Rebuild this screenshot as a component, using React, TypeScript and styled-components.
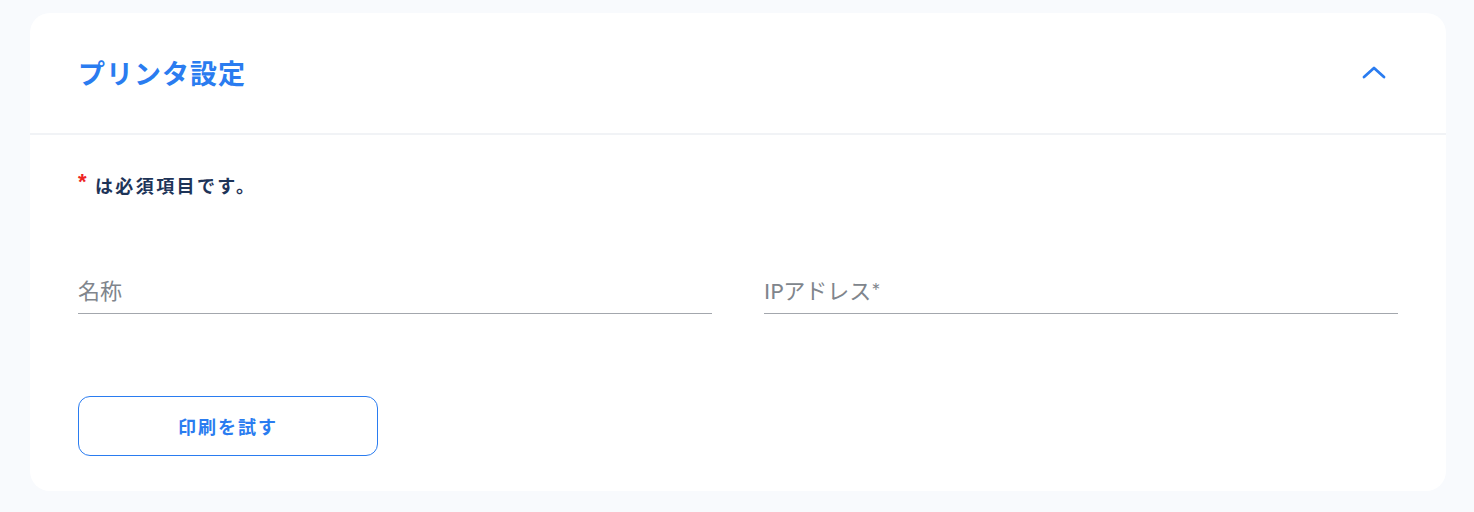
import React from "react";
import styled, { createGlobalStyle } from "styled-components";

const GlobalStyle = createGlobalStyle`
  html, body {
    margin: 0;
    padding: 0;
    background: #f8fafd;
    font-family: "Noto Sans CJK JP", "Noto Sans", sans-serif;
  }
`;

const Page = styled.div`
  padding: 13px 28px 21px 30px;
  box-sizing: border-box;
  width: 1474px;
  min-height: 512px;
`;

const Card = styled.section`
  background: #ffffff;
  border-radius: 20px;
  overflow: hidden;
`;

const Header = styled.header`
  height: 122px;
  box-sizing: border-box;
  display: flex;
  align-items: center;
  justify-content: space-between;
  padding: 0 58px 2px 48px;
  border-bottom: 2px solid #f1f3f6;
`;

const Title = styled.h2`
  margin: 0;
  font-size: 27px;
  font-weight: 700;
  letter-spacing: 1px;
  color: #2a7cf0;
`;

const Toggle = styled.button`
  border: none;
  background: none;
  padding: 0;
  width: 28px;
  height: 28px;
  display: flex;
  align-items: center;
  justify-content: center;
  cursor: pointer;
`;

const Body = styled.div`
  padding: 36px 48px 35px 48px;
`;

const Required = styled.p`
  margin: 0;
  font-size: 18px;
  line-height: 28px;
  font-weight: 700;
  letter-spacing: 2.4px;
  color: #1e3458;
  display: flex;
  align-items: center;
  gap: 6px;
`;

const Star = styled.span`
  color: #ee2424;
  font-family: "Liberation Sans", sans-serif;
  font-size: 22px;
  font-weight: 700;
  line-height: 1;
  position: relative;
  top: -3px;
`;

const Fields = styled.div`
  display: grid;
  grid-template-columns: 1fr 1fr;
  gap: 52px;
  margin-top: 77px;
`;

const Field = styled.label`
  display: block;
  border-bottom: 1.5px solid #a3a7ad;
  padding-bottom: 7px;
`;

const FieldLabel = styled.span`
  display: block;
  font-family: "Lato", "Noto Sans CJK JP", sans-serif;
  font-size: 22px;
  line-height: 30px;
  color: #80858c;
`;

const Actions = styled.div`
  margin-top: 82px;
`;

const OutlineButton = styled.button`
  width: 300px;
  height: 60px;
  border: 1.5px solid #2a7cf0;
  border-radius: 12px;
  background: #ffffff;
  color: #2a7cf0;
  font-family: "Noto Sans CJK JP", "Noto Sans", sans-serif;
  font-size: 18px;
  font-weight: 700;
  letter-spacing: 2px;
  cursor: pointer;
`;

export default function App() {
  return (
    <>
      <GlobalStyle />
      <Page>
        <Card>
          <Header>
            <Title>プリンタ設定</Title>
            <Toggle aria-label="折りたたむ">
              <svg width="24" height="14" viewBox="0 0 24 14" fill="none">
                <path
                  d="M2 12 L12 3 L22 12"
                  stroke="#2a7cf0"
                  strokeWidth="2.8"
                  strokeLinecap="round"
                  strokeLinejoin="round"
                />
              </svg>
            </Toggle>
          </Header>
          <Body>
            <Required>
              <Star>*</Star>
              <span>は必須項目です。</span>
            </Required>
            <Fields>
              <Field>
                <FieldLabel>名称</FieldLabel>
              </Field>
              <Field>
                <FieldLabel>IPアドレス*</FieldLabel>
              </Field>
            </Fields>
            <Actions>
              <OutlineButton>印刷を試す</OutlineButton>
            </Actions>
          </Body>
        </Card>
      </Page>
    </>
  );
}
